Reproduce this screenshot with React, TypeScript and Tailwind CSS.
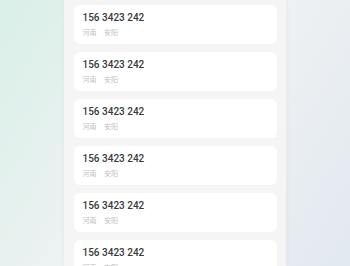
const contacts = Array.from({ length: 6 }, () => ({
  phone: "156 3423 242",
  province: "河南",
  city: "安阳",
}))

export default function App() {
  return (
    <div className="w-[350px] h-[266px] overflow-hidden bg-linear-120 from-[#d9efe8] via-[#f1f3f4] to-[#e1e8ef] flex justify-center">
      <div className="w-[222px] h-full bg-[#f5f5f5] shadow-[0_0_6px_rgba(0,0,0,0.04)] pt-[4.7px] px-[9.5px] flex flex-col gap-[7.5px]">
        {contacts.map((c, i) => (
          <ContactCard key={i} {...c} />
        ))}
      </div>
    </div>
  )
}

function ContactCard({ phone, province, city }: { phone: string; province: string; city: string }) {
  return (
    <div className="shrink-0 h-[39.5px] bg-white rounded-[6px] pl-[9px] pt-[6.7px]">
      <div className="text-[10px] leading-[14px] font-medium text-[#3a3a3a] font-['Roboto','Liberation_Sans',sans-serif]">
        {phone}
      </div>
      <div className="mt-[1.5px] flex gap-[7.5px] text-[7px] leading-[10px] text-[#c2c2c2] font-['Noto_Sans_CJK_SC',sans-serif]">
        <span>{province}</span>
        <span>{city}</span>
      </div>
    </div>
  )
}
